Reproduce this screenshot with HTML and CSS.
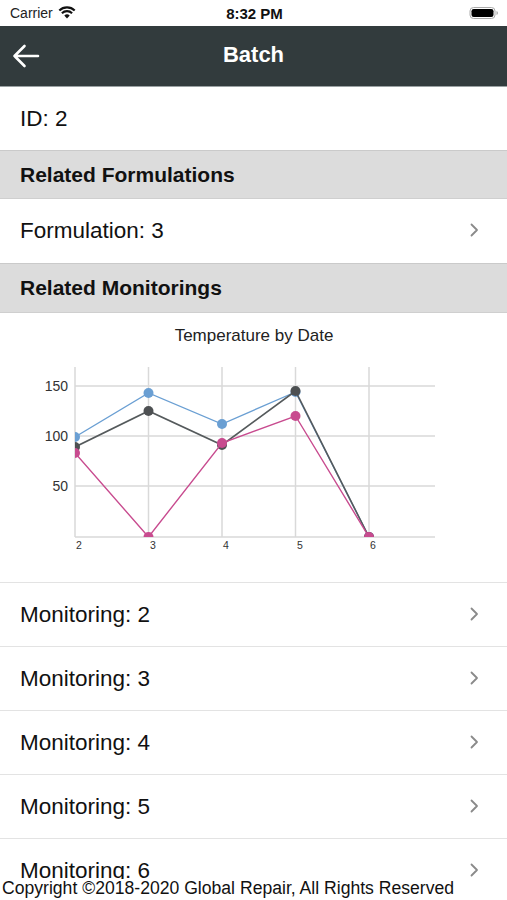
FILE: index.html
```html
<!DOCTYPE html>
<html>
<head>
<meta charset="utf-8">
<link rel="stylesheet" href="styles.css">
</head>
<body>
<div class="screen">
  <div class="statusbar">
    <div class="sb-left">Carrier
      <svg class="wifi" width="18" height="13" viewBox="0 0 18 13"><path d="M9 12.5 L6.3 9.6 A3.8 3.8 0 0 1 11.7 9.6 Z" fill="#111"/><path d="M3.9 7.2 A7.3 7.3 0 0 1 14.1 7.2" stroke="#111" stroke-width="2.1" fill="none"/><path d="M1.3 4.5 A11 11 0 0 1 16.7 4.5" stroke="#111" stroke-width="2.1" fill="none"/></svg>
    </div>
    <div class="sb-time">8:32 PM</div>
    <div class="sb-right">
      <svg width="30" height="14" viewBox="0 0 30 14"><rect x="1" y="1.5" width="25" height="11" rx="3.5" fill="none" stroke="#aaa" stroke-width="1"/><rect x="2.5" y="3" width="22" height="8" rx="2.2" fill="#000"/><path d="M27.5 5 Q29 5.5 29 7 Q29 8.5 27.5 9 Z" fill="#aaa"/></svg>
    </div>
  </div>
  <div class="navbar">
    <svg class="back" width="28" height="24" viewBox="0 0 28 24"><path d="M2.5 12 H26 M12.5 2 L2.5 12 L12.5 22" stroke="#fff" stroke-width="2.6" fill="none" stroke-linecap="round" stroke-linejoin="round"/></svg>
    <div class="nav-title">Batch</div>
  </div>
  <div class="content">
    <div class="row plain">ID: 2</div>
    <div class="section first">Related Formulations</div>
    <div class="row link"><span>Formulation: 3</span><svg class="chev" width="9" height="14" viewBox="0 0 9 14"><path d="M1.5 1.5 L7 7 L1.5 12.5" stroke="#8a8a8a" stroke-width="1.8" fill="none" stroke-linecap="round" stroke-linejoin="round"/></svg></div>
    <div class="section">Related Monitorings</div>
    <div class="chart">
      <svg width="507" height="269" viewBox="0 0 507 269">
        <defs><clipPath id="plot"><rect x="75" y="54" width="360" height="170"/></clipPath></defs>
        <text x="254" y="28" text-anchor="middle" class="ctitle">Temperature by Date</text>
        <g stroke="#d9d9d9" stroke-width="1.5">
          <line x1="75" y1="73" x2="435" y2="73"/>
          <line x1="75" y1="123" x2="435" y2="123"/>
          <line x1="75" y1="173" x2="435" y2="173"/>
          <line x1="75" y1="224" x2="435" y2="224"/>
          <line x1="75" y1="54" x2="75" y2="224"/>
          <line x1="148.5" y1="54" x2="148.5" y2="224"/>
          <line x1="222" y1="54" x2="222" y2="224"/>
          <line x1="295.5" y1="54" x2="295.5" y2="224"/>
          <line x1="369" y1="54" x2="369" y2="224"/>
        </g>
        <g class="ylab" text-anchor="end">
          <text x="68" y="78">150</text>
          <text x="68" y="128">100</text>
          <text x="68" y="178">50</text>
        </g>
        <g class="xlab">
          <text x="76" y="236">2</text>
          <text x="150" y="236">3</text>
          <text x="223" y="236">4</text>
          <text x="297" y="236">5</text>
          <text x="370" y="236">6</text>
        </g>
        <g clip-path="url(#plot)">
          <polyline points="75,124 148.5,80 222,111 295.5,79 369,224" fill="none" stroke="#6a9fd3" stroke-width="1.3"/>
          <g fill="#6a9fd3">
            <circle cx="75" cy="124" r="5"/><circle cx="148.5" cy="80" r="5"/><circle cx="222" cy="111" r="5"/><circle cx="295.5" cy="79" r="5"/><circle cx="369" cy="224" r="5"/>
          </g>
          <polyline points="75,134 148.5,98 222,132 295.5,78 369,224" fill="none" stroke="#555a5c" stroke-width="1.6"/>
          <g fill="#4d5052">
            <circle cx="75" cy="134" r="5"/><circle cx="148.5" cy="98" r="5"/><circle cx="222" cy="132" r="5"/><circle cx="295.5" cy="78" r="5"/><circle cx="369" cy="224" r="5"/>
          </g>
          <polyline points="75,140 148.5,224 222,130 295.5,103 369,224" fill="none" stroke="#c84b8f" stroke-width="1.4"/>
          <g fill="#c84b8f">
            <circle cx="75" cy="140" r="5"/><circle cx="148.5" cy="224" r="5"/><circle cx="222" cy="130" r="5"/><circle cx="295.5" cy="103" r="5"/><circle cx="369" cy="224" r="5"/>
          </g>
        </g>
      </svg>
    </div>
    <div class="row link bordered"><span>Monitoring: 2</span><svg class="chev" width="9" height="14" viewBox="0 0 9 14"><path d="M1.5 1.5 L7 7 L1.5 12.5" stroke="#8a8a8a" stroke-width="1.8" fill="none" stroke-linecap="round" stroke-linejoin="round"/></svg></div>
    <div class="row link bordered"><span>Monitoring: 3</span><svg class="chev" width="9" height="14" viewBox="0 0 9 14"><path d="M1.5 1.5 L7 7 L1.5 12.5" stroke="#8a8a8a" stroke-width="1.8" fill="none" stroke-linecap="round" stroke-linejoin="round"/></svg></div>
    <div class="row link bordered"><span>Monitoring: 4</span><svg class="chev" width="9" height="14" viewBox="0 0 9 14"><path d="M1.5 1.5 L7 7 L1.5 12.5" stroke="#8a8a8a" stroke-width="1.8" fill="none" stroke-linecap="round" stroke-linejoin="round"/></svg></div>
    <div class="row link bordered"><span>Monitoring: 5</span><svg class="chev" width="9" height="14" viewBox="0 0 9 14"><path d="M1.5 1.5 L7 7 L1.5 12.5" stroke="#8a8a8a" stroke-width="1.8" fill="none" stroke-linecap="round" stroke-linejoin="round"/></svg></div>
    <div class="row link bordered"><span>Monitoring: 6</span><svg class="chev" width="9" height="14" viewBox="0 0 9 14"><path d="M1.5 1.5 L7 7 L1.5 12.5" stroke="#8a8a8a" stroke-width="1.8" fill="none" stroke-linecap="round" stroke-linejoin="round"/></svg></div>
  </div>
  <div class="footer">Copyright ©2018-2020 Global Repair, All Rights Reserved</div>
</div>
</body>
</html>
```

FILE: styles.css
```css
* { box-sizing: border-box; }
html, body { margin: 0; padding: 0; background: #fff; }
body { font-family: "Liberation Sans", Arial, sans-serif; color: #111; }
.screen { width: 507px; height: 900px; display: flex; flex-direction: column; overflow: hidden; }
.statusbar { height: 26px; flex: none; display: flex; align-items: center; justify-content: space-between; padding: 0 8px 0 10px; position: relative; font-size: 14px; }
.sb-left { display: flex; align-items: center; gap: 5px; color: #222; width: 120px; }
.wifi { margin-top: -2px; }
.sb-time { font-weight: bold; font-size: 15px; color: #111; }
.sb-right { width: 120px; display: flex; justify-content: flex-end; }
.navbar { height: 61px; flex: none; background: #323b3d; border-bottom: 1px solid #9aa1a3; display: flex; align-items: center; justify-content: center; position: relative; }
.back { position: absolute; left: 12px; top: 18px; }
.nav-title { color: #fff; font-weight: bold; font-size: 22px; margin-top: -2px; }
.content { flex: 1; overflow: hidden; }
.row { display: flex; align-items: center; justify-content: space-between; padding: 0 28px 0 20px; font-size: 22.5px; color: #111; }
.plain { height: 63px; }
.link { height: 64px; }
.bordered { border-top: 1px solid #e3e3e3; }
.chev { margin-top: -2px; }
.section { height: 50px; background: #dcdcdc; border-top: 1px solid #cacaca; border-bottom: 1px solid #cfcfcf; display: flex; align-items: center; padding: 0 20px; font-weight: bold; font-size: 21px; color: #111; }
.section.first { height: 49px; }
.chart { height: 269px; }
.chart svg { display: block; }
.ctitle { font-family: "Liberation Sans", Arial, sans-serif; font-size: 17px; fill: #222; }
.ylab text { font-family: "Liberation Sans", Arial, sans-serif; font-size: 14px; fill: #333; }
.xlab text { font-family: "Liberation Sans", Arial, sans-serif; font-size: 10.5px; fill: #333; }
.footer { height: 21px; flex: none; background: #fff; font-size: 17.6px; padding-left: 2px; line-height: 18px; color: #111; white-space: nowrap; }
```
